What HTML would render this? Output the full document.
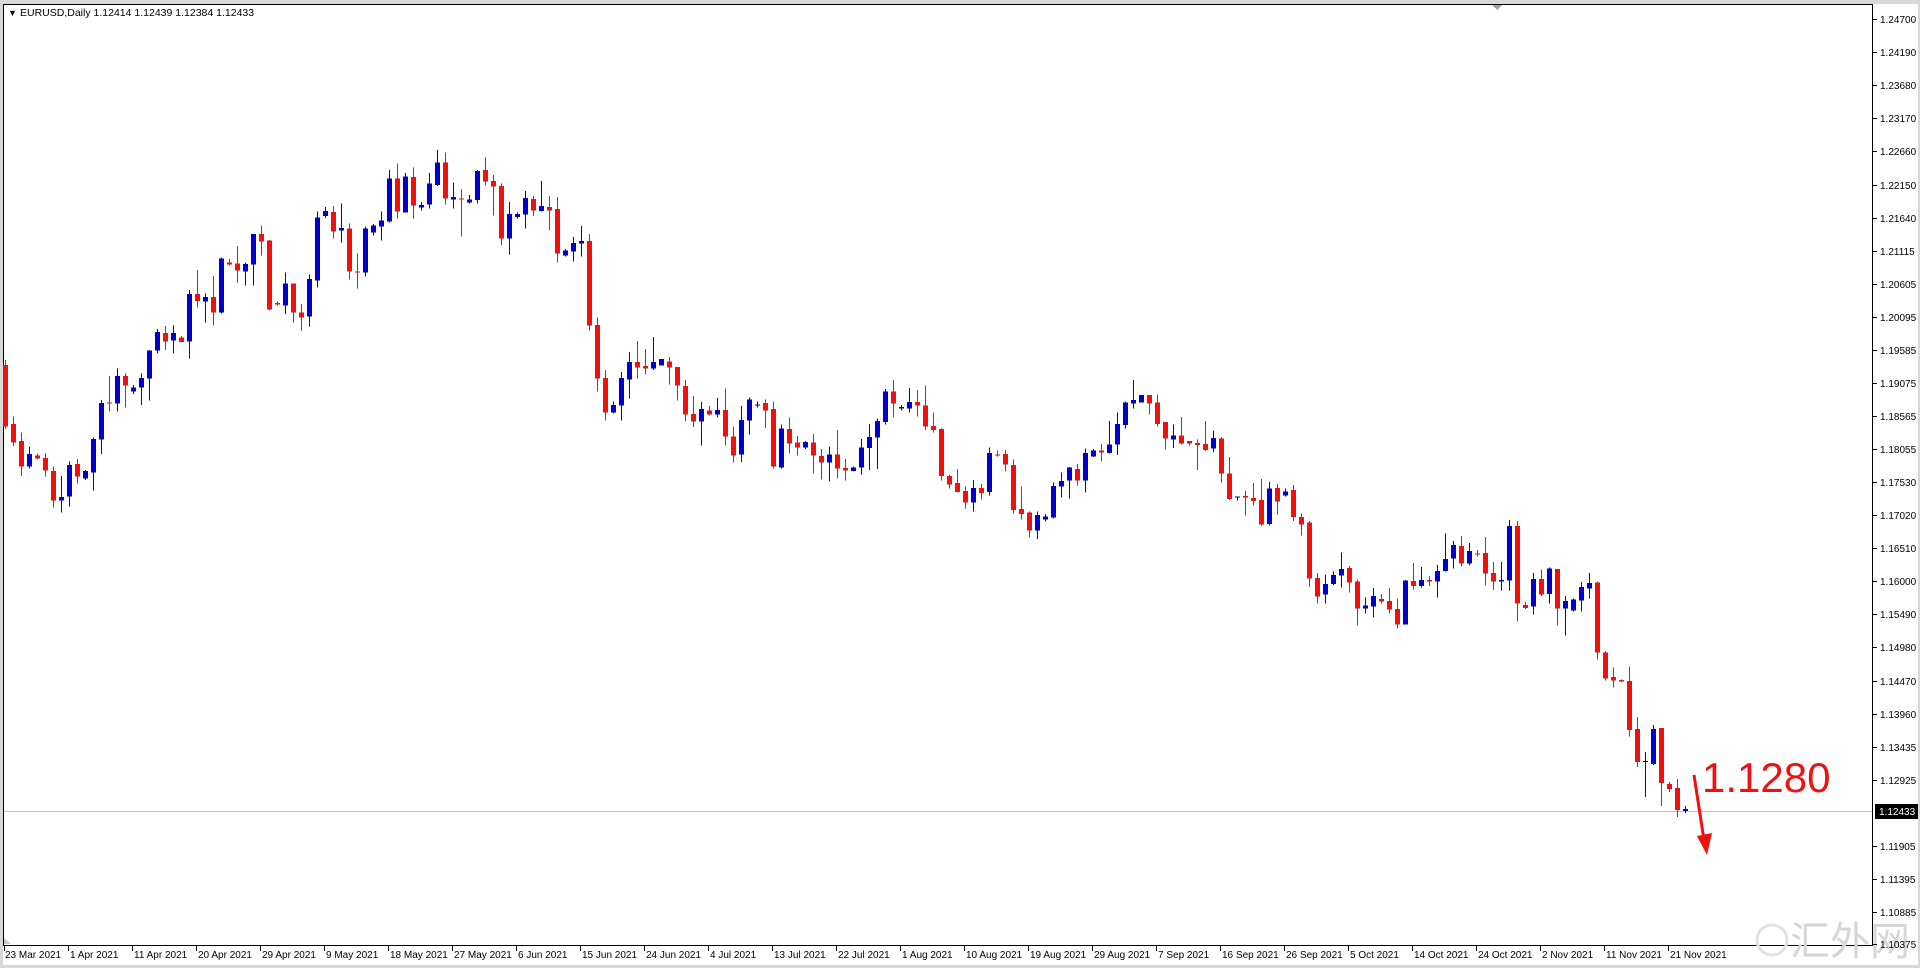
<!DOCTYPE html>
<html><head><meta charset="utf-8"><style>
html,body{margin:0;padding:0;background:#fff;}
svg{display:block}
.r{fill:#f01010}.b{fill:#0000c8}
text{font-family:"Liberation Sans",sans-serif;}
</style></head><body>
<svg width="1920" height="968" viewBox="0 0 1920 968" xmlns="http://www.w3.org/2000/svg" shape-rendering="crispEdges">
<rect x="0" y="0" width="1920" height="968" fill="#d8d8d8"/>
<rect x="3" y="4" width="1915" height="961" fill="#fff"/>
<line x1="3.5" y1="4" x2="3.5" y2="946" stroke="#000"/>
<line x1="3" y1="4.5" x2="1873" y2="4.5" stroke="#000"/>
<line x1="1872.5" y1="4" x2="1872.5" y2="946" stroke="#000"/>
<line x1="3" y1="945.5" x2="1873" y2="945.5" stroke="#000"/>
<polygon points="1492,5 1502,5 1497,10" fill="#a0a0a0"/>
<polygon points="4,938 4,944 11,944" fill="#c8c8c8"/>
<line x1="4" y1="811.5" x2="1872" y2="811.5" stroke="#c0c0c0"/>
<text x="8" y="16" font-size="9">▼</text>
<text x="20" y="16" font-size="10.5">EURUSD,Daily  1.12414 1.12439 1.12384 1.12433</text>

<g transform="translate(0,140) scale(1,0.333333)">
<rect class="r" x="3" y="675" width="5" height="185"/><rect class="r" x="5" y="660" width="1" height="205"/>
<rect class="r" x="11" y="852" width="5" height="56"/><rect class="r" x="13" y="830" width="1" height="88"/>
<rect class="r" x="19" y="903" width="5" height="77"/><rect class="r" x="21" y="877" width="1" height="131"/>
<rect class="b" x="27" y="942" width="5" height="38"/><rect class="b" x="29" y="920" width="1" height="65"/>
<rect class="r" x="35" y="947" width="5" height="8"/><rect class="r" x="37" y="940" width="1" height="18"/>
<rect class="r" x="43" y="954" width="5" height="38"/><rect class="r" x="45" y="940" width="1" height="70"/>
<rect class="r" x="51" y="993" width="5" height="89"/><rect class="r" x="53" y="980" width="1" height="123"/>
<rect class="b" x="59" y="1071" width="5" height="11"/><rect class="b" x="61" y="1008" width="1" height="110"/>
<rect class="b" x="67" y="975" width="5" height="95"/><rect class="b" x="69" y="965" width="1" height="135"/>
<rect class="r" x="75" y="972" width="5" height="38"/><rect class="r" x="77" y="957" width="1" height="73"/>
<rect class="b" x="83" y="993" width="5" height="22"/><rect class="b" x="85" y="990" width="1" height="30"/>
<rect class="b" x="91" y="897" width="5" height="101"/><rect class="b" x="93" y="893" width="1" height="159"/>
<rect class="b" x="99" y="789" width="5" height="109"/><rect class="b" x="101" y="780" width="1" height="162"/>
<rect class="r" x="107" y="787" width="5" height="4"/><rect class="r" x="109" y="708" width="1" height="107"/>
<rect class="b" x="115" y="708" width="5" height="82"/><rect class="b" x="117" y="685" width="1" height="130"/>
<rect class="r" x="123" y="708" width="5" height="29"/><rect class="r" x="125" y="700" width="1" height="103"/>
<rect class="b" x="131" y="743" width="5" height="12"/><rect class="b" x="133" y="735" width="1" height="27"/>
<rect class="b" x="139" y="714" width="5" height="29"/><rect class="b" x="141" y="700" width="1" height="95"/>
<rect class="b" x="147" y="632" width="5" height="84"/><rect class="b" x="149" y="630" width="1" height="152"/>
<rect class="b" x="155" y="576" width="5" height="56"/><rect class="b" x="157" y="567" width="1" height="74"/>
<rect class="r" x="163" y="579" width="5" height="25"/><rect class="r" x="165" y="558" width="1" height="72"/>
<rect class="b" x="171" y="579" width="5" height="23"/><rect class="b" x="173" y="556" width="1" height="84"/>
<rect class="r" x="179" y="592" width="5" height="14"/><rect class="r" x="181" y="588" width="1" height="20"/>
<rect class="b" x="187" y="462" width="5" height="143"/><rect class="b" x="189" y="450" width="1" height="206"/>
<rect class="r" x="195" y="462" width="5" height="21"/><rect class="r" x="197" y="390" width="1" height="113"/>
<rect class="b" x="203" y="471" width="5" height="14"/><rect class="b" x="205" y="460" width="1" height="88"/>
<rect class="r" x="211" y="471" width="5" height="47"/><rect class="r" x="213" y="408" width="1" height="148"/>
<rect class="b" x="219" y="356" width="5" height="162"/><rect class="b" x="221" y="352" width="1" height="168"/>
<rect class="r" x="227" y="367" width="5" height="7"/><rect class="r" x="229" y="357" width="1" height="19"/>
<rect class="r" x="235" y="370" width="5" height="22"/><rect class="r" x="237" y="318" width="1" height="110"/>
<rect class="b" x="243" y="372" width="5" height="23"/><rect class="b" x="245" y="367" width="1" height="70"/>
<rect class="b" x="251" y="282" width="5" height="92"/><rect class="b" x="253" y="282" width="1" height="155"/>
<rect class="r" x="259" y="282" width="5" height="23"/><rect class="r" x="261" y="256" width="1" height="91"/>
<rect class="r" x="267" y="302" width="5" height="206"/><rect class="r" x="269" y="300" width="1" height="212"/>
<rect class="r" x="275" y="489" width="5" height="5"/><rect class="r" x="277" y="484" width="1" height="13"/>
<rect class="b" x="283" y="430" width="5" height="67"/><rect class="b" x="285" y="397" width="1" height="125"/>
<rect class="r" x="291" y="430" width="5" height="88"/><rect class="r" x="293" y="430" width="1" height="118"/>
<rect class="r" x="299" y="517" width="5" height="15"/><rect class="r" x="301" y="492" width="1" height="79"/>
<rect class="b" x="307" y="417" width="5" height="113"/><rect class="b" x="309" y="404" width="1" height="156"/>
<rect class="b" x="315" y="232" width="5" height="190"/><rect class="b" x="317" y="214" width="1" height="229"/>
<rect class="b" x="323" y="213" width="5" height="15"/><rect class="b" x="325" y="201" width="1" height="33"/>
<rect class="r" x="331" y="216" width="5" height="59"/><rect class="r" x="333" y="198" width="1" height="98"/>
<rect class="b" x="339" y="264" width="5" height="8"/><rect class="b" x="341" y="191" width="1" height="117"/>
<rect class="r" x="347" y="265" width="5" height="130"/><rect class="r" x="349" y="250" width="1" height="168"/>
<rect class="r" x="355" y="394" width="5" height="4"/><rect class="r" x="357" y="340" width="1" height="106"/>
<rect class="b" x="363" y="265" width="5" height="133"/><rect class="b" x="365" y="260" width="1" height="150"/>
<rect class="b" x="371" y="256" width="5" height="22"/><rect class="b" x="373" y="252" width="1" height="35"/>
<rect class="b" x="379" y="241" width="5" height="19"/><rect class="b" x="381" y="215" width="1" height="87"/>
<rect class="b" x="387" y="115" width="5" height="130"/><rect class="b" x="389" y="90" width="1" height="158"/>
<rect class="r" x="395" y="115" width="5" height="100"/><rect class="r" x="397" y="70" width="1" height="166"/>
<rect class="b" x="403" y="109" width="5" height="108"/><rect class="b" x="405" y="99" width="1" height="119"/>
<rect class="r" x="411" y="111" width="5" height="85"/><rect class="r" x="413" y="82" width="1" height="154"/>
<rect class="b" x="419" y="195" width="5" height="8"/><rect class="b" x="421" y="186" width="1" height="26"/>
<rect class="b" x="427" y="130" width="5" height="63"/><rect class="b" x="429" y="99" width="1" height="107"/>
<rect class="b" x="435" y="67" width="5" height="68"/><rect class="b" x="437" y="30" width="1" height="108"/>
<rect class="r" x="443" y="67" width="5" height="109"/><rect class="r" x="445" y="37" width="1" height="156"/>
<rect class="b" x="451" y="171" width="5" height="8"/><rect class="b" x="453" y="128" width="1" height="78"/>
<rect class="r" x="459" y="175" width="5" height="4"/><rect class="r" x="461" y="148" width="1" height="142"/>
<rect class="b" x="467" y="178" width="5" height="9"/><rect class="b" x="469" y="165" width="1" height="25"/>
<rect class="b" x="475" y="93" width="5" height="87"/><rect class="b" x="477" y="90" width="1" height="100"/>
<rect class="r" x="483" y="90" width="5" height="35"/><rect class="r" x="485" y="52" width="1" height="84"/>
<rect class="r" x="491" y="123" width="5" height="17"/><rect class="r" x="493" y="105" width="1" height="122"/>
<rect class="r" x="499" y="138" width="5" height="158"/><rect class="r" x="501" y="130" width="1" height="187"/>
<rect class="b" x="507" y="222" width="5" height="74"/><rect class="b" x="509" y="186" width="1" height="158"/>
<rect class="b" x="515" y="222" width="5" height="9"/><rect class="b" x="517" y="218" width="1" height="17"/>
<rect class="b" x="523" y="174" width="5" height="50"/><rect class="b" x="525" y="153" width="1" height="113"/>
<rect class="r" x="531" y="177" width="5" height="35"/><rect class="r" x="533" y="168" width="1" height="60"/>
<rect class="b" x="539" y="198" width="5" height="15"/><rect class="b" x="541" y="123" width="1" height="92"/>
<rect class="r" x="547" y="201" width="5" height="11"/><rect class="r" x="549" y="168" width="1" height="102"/>
<rect class="r" x="555" y="207" width="5" height="134"/><rect class="r" x="557" y="171" width="1" height="197"/>
<rect class="b" x="563" y="331" width="5" height="16"/><rect class="b" x="565" y="327" width="1" height="23"/>
<rect class="b" x="571" y="309" width="5" height="26"/><rect class="b" x="573" y="291" width="1" height="74"/>
<rect class="b" x="579" y="303" width="5" height="8"/><rect class="b" x="581" y="258" width="1" height="92"/>
<rect class="r" x="587" y="303" width="5" height="253"/><rect class="r" x="589" y="282" width="1" height="290"/>
<rect class="r" x="595" y="555" width="5" height="161"/><rect class="r" x="597" y="532" width="1" height="223"/>
<rect class="r" x="603" y="714" width="5" height="104"/><rect class="r" x="605" y="690" width="1" height="152"/>
<rect class="b" x="611" y="795" width="5" height="23"/><rect class="b" x="613" y="785" width="1" height="35"/>
<rect class="b" x="619" y="714" width="5" height="83"/><rect class="b" x="621" y="696" width="1" height="146"/>
<rect class="b" x="627" y="666" width="5" height="53"/><rect class="b" x="629" y="636" width="1" height="140"/>
<rect class="r" x="635" y="666" width="5" height="17"/><rect class="r" x="637" y="603" width="1" height="113"/>
<rect class="r" x="643" y="678" width="5" height="8"/><rect class="r" x="645" y="627" width="1" height="77"/>
<rect class="b" x="651" y="666" width="5" height="20"/><rect class="b" x="653" y="591" width="1" height="99"/>
<rect class="b" x="659" y="657" width="5" height="19"/><rect class="b" x="661" y="657" width="1" height="20"/>
<rect class="r" x="667" y="664" width="5" height="19"/><rect class="r" x="669" y="651" width="1" height="83"/>
<rect class="r" x="675" y="681" width="5" height="56"/><rect class="r" x="677" y="681" width="1" height="100"/>
<rect class="r" x="683" y="738" width="5" height="86"/><rect class="r" x="685" y="720" width="1" height="125"/>
<rect class="r" x="691" y="822" width="5" height="23"/><rect class="r" x="693" y="768" width="1" height="93"/>
<rect class="b" x="699" y="807" width="5" height="38"/><rect class="b" x="701" y="786" width="1" height="131"/>
<rect class="r" x="707" y="812" width="5" height="12"/><rect class="r" x="709" y="798" width="1" height="28"/>
<rect class="b" x="715" y="810" width="5" height="14"/><rect class="b" x="717" y="774" width="1" height="59"/>
<rect class="r" x="723" y="810" width="5" height="79"/><rect class="r" x="725" y="746" width="1" height="170"/>
<rect class="r" x="731" y="890" width="5" height="56"/><rect class="r" x="733" y="860" width="1" height="107"/>
<rect class="b" x="739" y="840" width="5" height="104"/><rect class="b" x="741" y="798" width="1" height="168"/>
<rect class="b" x="747" y="779" width="5" height="63"/><rect class="b" x="749" y="773" width="1" height="111"/>
<rect class="b" x="755" y="793" width="5" height="3"/><rect class="b" x="757" y="785" width="1" height="18"/>
<rect class="r" x="763" y="789" width="5" height="22"/><rect class="r" x="765" y="778" width="1" height="86"/>
<rect class="r" x="771" y="807" width="5" height="173"/><rect class="r" x="773" y="785" width="1" height="201"/>
<rect class="b" x="779" y="866" width="5" height="117"/><rect class="b" x="781" y="854" width="1" height="131"/>
<rect class="r" x="787" y="867" width="5" height="44"/><rect class="r" x="789" y="832" width="1" height="109"/>
<rect class="r" x="795" y="908" width="5" height="14"/><rect class="r" x="797" y="888" width="1" height="58"/>
<rect class="b" x="803" y="906" width="5" height="17"/><rect class="b" x="805" y="903" width="1" height="24"/>
<rect class="r" x="811" y="908" width="5" height="38"/><rect class="r" x="813" y="882" width="1" height="118"/>
<rect class="r" x="819" y="948" width="5" height="19"/><rect class="r" x="821" y="927" width="1" height="91"/>
<rect class="b" x="827" y="944" width="5" height="23"/><rect class="b" x="829" y="920" width="1" height="105"/>
<rect class="r" x="835" y="944" width="5" height="42"/><rect class="r" x="837" y="870" width="1" height="145"/>
<rect class="r" x="843" y="984" width="5" height="8"/><rect class="r" x="845" y="957" width="1" height="65"/>
<rect class="b" x="851" y="983" width="5" height="10"/><rect class="b" x="853" y="980" width="1" height="15"/>
</g>

<g transform="translate(0,360) scale(1,0.333333)">
<rect class="b" x="859" y="262" width="5" height="61"/><rect class="b" x="861" y="237" width="1" height="107"/>
<rect class="b" x="867" y="231" width="5" height="33"/><rect class="b" x="869" y="192" width="1" height="138"/>
<rect class="b" x="875" y="183" width="5" height="50"/><rect class="b" x="877" y="175" width="1" height="152"/>
<rect class="b" x="883" y="95" width="5" height="91"/><rect class="b" x="885" y="87" width="1" height="106"/>
<rect class="r" x="891" y="95" width="5" height="36"/><rect class="r" x="893" y="60" width="1" height="113"/>
<rect class="b" x="899" y="141" width="5" height="5"/><rect class="b" x="901" y="135" width="1" height="17"/>
<rect class="b" x="907" y="126" width="5" height="20"/><rect class="b" x="909" y="84" width="1" height="73"/>
<rect class="r" x="915" y="126" width="5" height="11"/><rect class="r" x="917" y="90" width="1" height="80"/>
<rect class="r" x="923" y="137" width="5" height="63"/><rect class="r" x="925" y="77" width="1" height="133"/>
<rect class="r" x="931" y="198" width="5" height="12"/><rect class="r" x="933" y="158" width="1" height="59"/>
<rect class="r" x="939" y="207" width="5" height="141"/><rect class="r" x="941" y="205" width="1" height="157"/>
<rect class="r" x="947" y="348" width="5" height="26"/><rect class="r" x="949" y="345" width="1" height="40"/>
<rect class="r" x="955" y="369" width="5" height="27"/><rect class="r" x="957" y="329" width="1" height="68"/>
<rect class="r" x="963" y="393" width="5" height="35"/><rect class="r" x="965" y="380" width="1" height="66"/>
<rect class="b" x="971" y="384" width="5" height="44"/><rect class="b" x="973" y="360" width="1" height="95"/>
<rect class="r" x="979" y="384" width="5" height="15"/><rect class="r" x="981" y="372" width="1" height="46"/>
<rect class="b" x="987" y="279" width="5" height="117"/><rect class="b" x="989" y="262" width="1" height="145"/>
<rect class="r" x="995" y="283" width="5" height="3"/><rect class="r" x="997" y="271" width="1" height="19"/>
<rect class="r" x="1003" y="282" width="5" height="32"/><rect class="r" x="1005" y="270" width="1" height="65"/>
<rect class="r" x="1011" y="315" width="5" height="135"/><rect class="r" x="1013" y="298" width="1" height="163"/>
<rect class="r" x="1019" y="447" width="5" height="15"/><rect class="r" x="1021" y="380" width="1" height="99"/>
<rect class="r" x="1027" y="458" width="5" height="54"/><rect class="r" x="1029" y="455" width="1" height="78"/>
<rect class="b" x="1035" y="465" width="5" height="47"/><rect class="b" x="1037" y="455" width="1" height="82"/>
<rect class="b" x="1043" y="470" width="5" height="9"/><rect class="b" x="1045" y="462" width="1" height="22"/>
<rect class="b" x="1051" y="378" width="5" height="94"/><rect class="b" x="1053" y="367" width="1" height="109"/>
<rect class="b" x="1059" y="363" width="5" height="17"/><rect class="b" x="1061" y="338" width="1" height="75"/>
<rect class="b" x="1067" y="323" width="5" height="39"/><rect class="b" x="1069" y="321" width="1" height="95"/>
<rect class="r" x="1075" y="327" width="5" height="35"/><rect class="r" x="1077" y="312" width="1" height="65"/>
<rect class="b" x="1083" y="279" width="5" height="83"/><rect class="b" x="1085" y="266" width="1" height="132"/>
<rect class="b" x="1091" y="272" width="5" height="17"/><rect class="b" x="1093" y="267" width="1" height="24"/>
<rect class="r" x="1099" y="272" width="5" height="6"/><rect class="r" x="1101" y="252" width="1" height="53"/>
<rect class="b" x="1107" y="253" width="5" height="26"/><rect class="b" x="1109" y="183" width="1" height="98"/>
<rect class="b" x="1115" y="192" width="5" height="62"/><rect class="b" x="1117" y="158" width="1" height="127"/>
<rect class="b" x="1123" y="128" width="5" height="67"/><rect class="b" x="1125" y="124" width="1" height="82"/>
<rect class="b" x="1131" y="120" width="5" height="11"/><rect class="b" x="1133" y="60" width="1" height="86"/>
<rect class="b" x="1139" y="105" width="5" height="22"/><rect class="b" x="1141" y="105" width="1" height="22"/>
<rect class="r" x="1147" y="105" width="5" height="26"/><rect class="r" x="1149" y="105" width="1" height="59"/>
<rect class="r" x="1155" y="128" width="5" height="64"/><rect class="r" x="1157" y="103" width="1" height="97"/>
<rect class="r" x="1163" y="186" width="5" height="50"/><rect class="r" x="1165" y="186" width="1" height="83"/>
<rect class="b" x="1171" y="226" width="5" height="13"/><rect class="b" x="1173" y="193" width="1" height="71"/>
<rect class="r" x="1179" y="226" width="5" height="25"/><rect class="r" x="1181" y="171" width="1" height="83"/>
<rect class="r" x="1187" y="243" width="5" height="8"/><rect class="r" x="1189" y="243" width="1" height="14"/>
<rect class="r" x="1195" y="249" width="5" height="6"/><rect class="r" x="1197" y="238" width="1" height="92"/>
<rect class="r" x="1203" y="252" width="5" height="18"/><rect class="r" x="1205" y="183" width="1" height="90"/>
<rect class="b" x="1211" y="234" width="5" height="32"/><rect class="b" x="1213" y="211" width="1" height="65"/>
<rect class="r" x="1219" y="236" width="5" height="105"/><rect class="r" x="1221" y="231" width="1" height="137"/>
<rect class="r" x="1227" y="340" width="5" height="77"/><rect class="r" x="1229" y="291" width="1" height="129"/>
<rect class="b" x="1235" y="409" width="5" height="3"/><rect class="b" x="1237" y="409" width="1" height="12"/>
<rect class="r" x="1243" y="408" width="5" height="5"/><rect class="r" x="1245" y="392" width="1" height="75"/>
<rect class="r" x="1251" y="414" width="5" height="9"/><rect class="r" x="1253" y="369" width="1" height="68"/>
<rect class="r" x="1259" y="420" width="5" height="73"/><rect class="r" x="1261" y="357" width="1" height="141"/>
<rect class="b" x="1267" y="386" width="5" height="106"/><rect class="b" x="1269" y="366" width="1" height="130"/>
<rect class="r" x="1275" y="384" width="5" height="41"/><rect class="r" x="1277" y="372" width="1" height="91"/>
<rect class="b" x="1283" y="395" width="5" height="11"/><rect class="b" x="1285" y="385" width="1" height="25"/>
<rect class="r" x="1291" y="390" width="5" height="81"/><rect class="r" x="1293" y="375" width="1" height="108"/>
</g>

<g transform="translate(0,500) scale(1,0.333333)">
<rect class="r" x="1299" y="51" width="5" height="23"/><rect class="r" x="1301" y="40" width="1" height="66"/>
<rect class="r" x="1307" y="68" width="5" height="168"/><rect class="r" x="1309" y="63" width="1" height="197"/>
<rect class="r" x="1315" y="234" width="5" height="56"/><rect class="r" x="1317" y="219" width="1" height="92"/>
<rect class="b" x="1323" y="252" width="5" height="32"/><rect class="b" x="1325" y="223" width="1" height="88"/>
<rect class="b" x="1331" y="225" width="5" height="27"/><rect class="b" x="1333" y="215" width="1" height="40"/>
<rect class="b" x="1339" y="207" width="5" height="20"/><rect class="b" x="1341" y="158" width="1" height="105"/>
<rect class="r" x="1347" y="204" width="5" height="44"/><rect class="r" x="1349" y="198" width="1" height="79"/>
<rect class="r" x="1355" y="245" width="5" height="81"/><rect class="r" x="1357" y="239" width="1" height="138"/>
<rect class="b" x="1363" y="316" width="5" height="10"/><rect class="b" x="1365" y="292" width="1" height="49"/>
<rect class="b" x="1371" y="288" width="5" height="32"/><rect class="b" x="1373" y="264" width="1" height="89"/>
<rect class="r" x="1379" y="297" width="5" height="8"/><rect class="r" x="1381" y="282" width="1" height="29"/>
<rect class="r" x="1387" y="303" width="5" height="26"/><rect class="r" x="1389" y="264" width="1" height="77"/>
<rect class="r" x="1395" y="327" width="5" height="47"/><rect class="r" x="1397" y="295" width="1" height="91"/>
<rect class="b" x="1403" y="242" width="5" height="132"/><rect class="b" x="1405" y="240" width="1" height="134"/>
<rect class="r" x="1411" y="243" width="5" height="15"/><rect class="r" x="1413" y="189" width="1" height="80"/>
<rect class="b" x="1419" y="240" width="5" height="18"/><rect class="b" x="1421" y="201" width="1" height="61"/>
<rect class="r" x="1427" y="240" width="5" height="4"/><rect class="r" x="1429" y="228" width="1" height="30"/>
<rect class="b" x="1435" y="213" width="5" height="32"/><rect class="b" x="1437" y="195" width="1" height="98"/>
<rect class="b" x="1443" y="177" width="5" height="36"/><rect class="b" x="1445" y="101" width="1" height="114"/>
<rect class="b" x="1451" y="135" width="5" height="41"/><rect class="b" x="1453" y="123" width="1" height="82"/>
<rect class="r" x="1459" y="138" width="5" height="53"/><rect class="r" x="1461" y="108" width="1" height="92"/>
<rect class="b" x="1467" y="153" width="5" height="38"/><rect class="b" x="1469" y="129" width="1" height="68"/>
<rect class="r" x="1475" y="160" width="5" height="4"/><rect class="r" x="1477" y="150" width="1" height="20"/>
<rect class="r" x="1483" y="159" width="5" height="62"/><rect class="r" x="1485" y="111" width="1" height="146"/>
<rect class="r" x="1491" y="219" width="5" height="25"/><rect class="r" x="1493" y="186" width="1" height="84"/>
<rect class="b" x="1499" y="240" width="5" height="4"/><rect class="b" x="1501" y="186" width="1" height="85"/>
<rect class="b" x="1507" y="78" width="5" height="164"/><rect class="b" x="1509" y="60" width="1" height="211"/>
<rect class="r" x="1515" y="78" width="5" height="233"/><rect class="r" x="1517" y="63" width="1" height="302"/>
<rect class="r" x="1523" y="315" width="5" height="9"/><rect class="r" x="1525" y="306" width="1" height="21"/>
<rect class="b" x="1531" y="237" width="5" height="83"/><rect class="b" x="1533" y="219" width="1" height="125"/>
<rect class="r" x="1539" y="237" width="5" height="46"/><rect class="r" x="1541" y="209" width="1" height="79"/>
<rect class="b" x="1547" y="206" width="5" height="76"/><rect class="b" x="1549" y="203" width="1" height="108"/>
<rect class="r" x="1555" y="207" width="5" height="119"/><rect class="r" x="1557" y="207" width="1" height="170"/>
<rect class="b" x="1563" y="303" width="5" height="23"/><rect class="b" x="1565" y="288" width="1" height="119"/>
<rect class="b" x="1571" y="299" width="5" height="33"/><rect class="b" x="1573" y="295" width="1" height="40"/>
<rect class="b" x="1579" y="261" width="5" height="41"/><rect class="b" x="1581" y="246" width="1" height="89"/>
<rect class="b" x="1587" y="249" width="5" height="17"/><rect class="b" x="1589" y="219" width="1" height="77"/>
<rect class="r" x="1595" y="248" width="5" height="210"/><rect class="r" x="1597" y="245" width="1" height="234"/>
<rect class="r" x="1603" y="458" width="5" height="77"/><rect class="r" x="1605" y="453" width="1" height="89"/>
<rect class="r" x="1611" y="531" width="5" height="11"/><rect class="r" x="1613" y="503" width="1" height="60"/>
<rect class="r" x="1619" y="540" width="5" height="5"/><rect class="r" x="1621" y="538" width="1" height="8"/>
<rect class="r" x="1627" y="543" width="5" height="147"/><rect class="r" x="1629" y="500" width="1" height="210"/>
</g>

<rect class="r" x="1635" y="729" width="5" height="33"/><rect class="r" x="1637" y="717" width="1" height="50"/>
<rect class="b" x="1643" y="761" width="5" height="1"/><rect class="b" x="1645" y="752" width="1" height="45"/>
<rect class="b" x="1651" y="729" width="5" height="35"/><rect class="b" x="1653" y="725" width="1" height="40"/>
<rect class="r" x="1659" y="728" width="5" height="55"/><rect class="r" x="1661" y="728" width="1" height="78"/>
<rect class="r" x="1667" y="784" width="5" height="5"/><rect class="r" x="1669" y="782" width="1" height="10"/>
<rect class="r" x="1675" y="788" width="5" height="22"/><rect class="r" x="1677" y="779" width="1" height="38"/>
<rect class="b" x="1683" y="809" width="5" height="2"/><rect class="b" x="1685" y="806" width="1" height="7"/>

<!-- annotation -->
<g shape-rendering="geometricPrecision">
<text x="1702" y="792" font-size="42" fill="#f01010">1.1280</text>
<line x1="1694" y1="775" x2="1704" y2="840" stroke="#f01010" stroke-width="3"/>
<polygon points="1697,836 1712,833 1707,855" fill="#f01010"/>
<!-- watermark -->
<circle cx="1772" cy="940" r="15" fill="none" stroke="#e2e2e2" stroke-width="3"/>
<text x="1790" y="955" font-size="40" fill="#d6d6d6" font-family="'Noto Sans CJK SC',sans-serif">汇外网</text>
</g>

<!-- price axis -->
<g font-size="10" fill="#000" shape-rendering="crispEdges">
<g stroke="#000">
<line x1="1873" y1="19.5" x2="1877" y2="19.5"/><line x1="1873" y1="52.5" x2="1877" y2="52.5"/><line x1="1873" y1="85.5" x2="1877" y2="85.5"/><line x1="1873" y1="118.5" x2="1877" y2="118.5"/><line x1="1873" y1="151.5" x2="1877" y2="151.5"/><line x1="1873" y1="185.5" x2="1877" y2="185.5"/><line x1="1873" y1="218.5" x2="1877" y2="218.5"/><line x1="1873" y1="251.5" x2="1877" y2="251.5"/><line x1="1873" y1="284.5" x2="1877" y2="284.5"/><line x1="1873" y1="317.5" x2="1877" y2="317.5"/><line x1="1873" y1="350.5" x2="1877" y2="350.5"/><line x1="1873" y1="383.5" x2="1877" y2="383.5"/><line x1="1873" y1="416.5" x2="1877" y2="416.5"/><line x1="1873" y1="449.5" x2="1877" y2="449.5"/><line x1="1873" y1="482.5" x2="1877" y2="482.5"/><line x1="1873" y1="515.5" x2="1877" y2="515.5"/><line x1="1873" y1="548.5" x2="1877" y2="548.5"/><line x1="1873" y1="581.5" x2="1877" y2="581.5"/><line x1="1873" y1="614.5" x2="1877" y2="614.5"/><line x1="1873" y1="647.5" x2="1877" y2="647.5"/><line x1="1873" y1="681.5" x2="1877" y2="681.5"/><line x1="1873" y1="714.5" x2="1877" y2="714.5"/><line x1="1873" y1="747.5" x2="1877" y2="747.5"/><line x1="1873" y1="780.5" x2="1877" y2="780.5"/><line x1="1873" y1="846.5" x2="1877" y2="846.5"/><line x1="1873" y1="879.5" x2="1877" y2="879.5"/><line x1="1873" y1="912.5" x2="1877" y2="912.5"/><line x1="1873" y1="944.5" x2="1877" y2="944.5"/>
</g>
<text x="1880" y="23">1.24700</text><text x="1880" y="56">1.24190</text><text x="1880" y="89">1.23680</text><text x="1880" y="122">1.23170</text><text x="1880" y="155">1.22660</text><text x="1880" y="189">1.22150</text><text x="1880" y="222">1.21640</text><text x="1880" y="255">1.21115</text><text x="1880" y="288">1.20605</text><text x="1880" y="321">1.20095</text><text x="1880" y="354">1.19585</text><text x="1880" y="387">1.19075</text><text x="1880" y="420">1.18565</text><text x="1880" y="453">1.18055</text><text x="1880" y="486">1.17530</text><text x="1880" y="519">1.17020</text><text x="1880" y="552">1.16510</text><text x="1880" y="585">1.16000</text><text x="1880" y="618">1.15490</text><text x="1880" y="651">1.14980</text><text x="1880" y="685">1.14470</text><text x="1880" y="718">1.13960</text><text x="1880" y="751">1.13435</text><text x="1880" y="784">1.12925</text><text x="1880" y="850">1.11905</text><text x="1880" y="883">1.11395</text><text x="1880" y="916">1.10885</text><text x="1880" y="948">1.10375</text>
<rect x="1875" y="804" width="43" height="15" fill="#000"/>
<text x="1879" y="815" fill="#fff">1.12433</text>
</g>

<!-- time axis -->
<g font-size="10" fill="#000">
<g stroke="#000" shape-rendering="crispEdges">
<line x1="4.5" y1="946" x2="4.5" y2="951"/><line x1="68.5" y1="946" x2="68.5" y2="951"/><line x1="132.5" y1="946" x2="132.5" y2="951"/><line x1="196.5" y1="946" x2="196.5" y2="951"/><line x1="260.5" y1="946" x2="260.5" y2="951"/><line x1="324.5" y1="946" x2="324.5" y2="951"/><line x1="388.5" y1="946" x2="388.5" y2="951"/><line x1="452.5" y1="946" x2="452.5" y2="951"/><line x1="516.5" y1="946" x2="516.5" y2="951"/><line x1="580.5" y1="946" x2="580.5" y2="951"/><line x1="644.5" y1="946" x2="644.5" y2="951"/><line x1="708.5" y1="946" x2="708.5" y2="951"/><line x1="772.5" y1="946" x2="772.5" y2="951"/><line x1="836.5" y1="946" x2="836.5" y2="951"/><line x1="900.5" y1="946" x2="900.5" y2="951"/><line x1="964.5" y1="946" x2="964.5" y2="951"/><line x1="1028.5" y1="946" x2="1028.5" y2="951"/><line x1="1092.5" y1="946" x2="1092.5" y2="951"/><line x1="1156.5" y1="946" x2="1156.5" y2="951"/><line x1="1220.5" y1="946" x2="1220.5" y2="951"/><line x1="1284.5" y1="946" x2="1284.5" y2="951"/><line x1="1348.5" y1="946" x2="1348.5" y2="951"/><line x1="1412.5" y1="946" x2="1412.5" y2="951"/><line x1="1476.5" y1="946" x2="1476.5" y2="951"/><line x1="1540.5" y1="946" x2="1540.5" y2="951"/><line x1="1604.5" y1="946" x2="1604.5" y2="951"/><line x1="1668.5" y1="946" x2="1668.5" y2="951"/>
</g>
<text x="5" y="958">23 Mar 2021</text><text x="70" y="958">1 Apr 2021</text><text x="134" y="958">11 Apr 2021</text><text x="198" y="958">20 Apr 2021</text><text x="262" y="958">29 Apr 2021</text><text x="326" y="958">9 May 2021</text><text x="390" y="958">18 May 2021</text><text x="454" y="958">27 May 2021</text><text x="518" y="958">6 Jun 2021</text><text x="582" y="958">15 Jun 2021</text><text x="646" y="958">24 Jun 2021</text><text x="710" y="958">4 Jul 2021</text><text x="774" y="958">13 Jul 2021</text><text x="838" y="958">22 Jul 2021</text><text x="902" y="958">1 Aug 2021</text><text x="966" y="958">10 Aug 2021</text><text x="1030" y="958">19 Aug 2021</text><text x="1094" y="958">29 Aug 2021</text><text x="1158" y="958">7 Sep 2021</text><text x="1222" y="958">16 Sep 2021</text><text x="1286" y="958">26 Sep 2021</text><text x="1350" y="958">5 Oct 2021</text><text x="1414" y="958">14 Oct 2021</text><text x="1478" y="958">24 Oct 2021</text><text x="1542" y="958">2 Nov 2021</text><text x="1606" y="958">11 Nov 2021</text><text x="1670" y="958">21 Nov 2021</text>
</g>
</svg>
</body></html>
